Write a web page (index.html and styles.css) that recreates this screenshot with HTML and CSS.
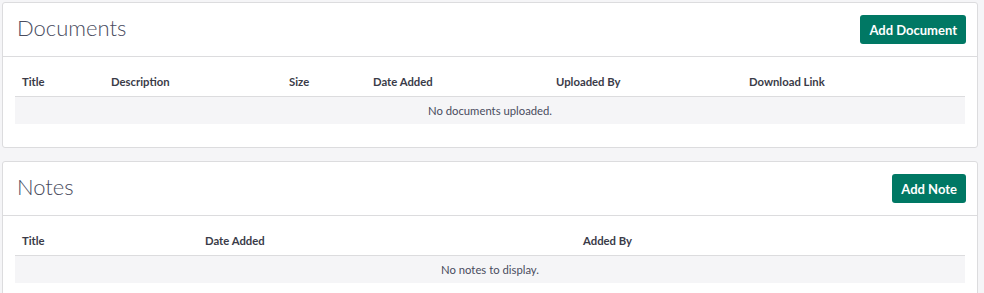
FILE: index.html
```html
<!DOCTYPE html>
<html lang="en">
<head>
    <meta charset="UTF-8">
    <title>Documents and Notes</title>
    <link rel="stylesheet" href="styles.css">
</head>
<body>

    <!-- Documents -->
    <div class="card">
        <div class="card-header">
            <h2>Documents</h2>
            <button class="add-button">Add Document</button>
        </div>
        <div class="card-body">
            <table class="list-table docs-table">
                <thead>
                    <tr>
                        <th>Title</th>
                        <th>Description</th>
                        <th>Size</th>
                        <th>Date Added</th>
                        <th>Uploaded By</th>
                        <th>Download Link</th>
                    </tr>
                </thead>
                <tbody>
                    <tr>
                        <td colspan="6" class="empty">No documents uploaded.</td>
                    </tr>
                </tbody>
            </table>
        </div>
    </div>

    <!-- Notes -->
    <div class="card">
        <div class="card-header">
            <h2>Notes</h2>
            <button class="add-button">Add Note</button>
        </div>
        <div class="card-body">
            <table class="list-table notes-table">
                <thead>
                    <tr>
                        <th>Title</th>
                        <th>Date Added</th>
                        <th>Added By</th>
                    </tr>
                </thead>
                <tbody>
                    <tr>
                        <td colspan="3" class="empty">No notes to display.</td>
                    </tr>
                </tbody>
            </table>
        </div>
    </div>

</body>
</html>
```

FILE: styles.css
```css
body {
    margin: 0;
    padding: 2px 6px 0 2px;
    background-color: #f5f5f7;
    font-family: Lato, "Open Sans", sans-serif;
    color: #3a3b48;
}

.card {
    background-color: #fff;
    border: 1px solid #dcdcde;
    border-radius: 3px;
    margin-bottom: 13px;
}

.card-header {
    display: flex;
    align-items: center;
    justify-content: space-between;
    padding: 12px 11px 12px 14px;
    border-bottom: 1px solid #dcdcde;
}

.card-header h2 {
    margin: 0 0 3px 0;
    font-size: 22px;
    line-height: 1;
    font-weight: 300;
    color: #494c5e;
}

.add-button {
    background-color: #007864;
    color: #fff;
    font-family: Lato, sans-serif;
    font-size: 13px;
    font-weight: 700;
    height: 29px;
    padding: 0 9px;
    border: none;
    border-radius: 3px;
    cursor: pointer;
}

.card-body {
    padding: 10px 12px 23px 12px;
}

.list-table {
    width: 100%;
    border-collapse: collapse;
    font-size: 11.3px;
}

.list-table th {
    text-align: left;
    font-weight: 700;
    color: #3a3b48;
    height: 29px;
    padding: 0 7px;
    border-bottom: 1px solid #dcdcde;
}

.list-table td.empty {
    background-color: #f5f5f7;
    text-align: center;
    color: #494c5e;
    height: 27px;
    padding: 0;
}

/* column widths exclude the 14px of cell padding */
.docs-table th:nth-child(1) { width: 75px; }
.docs-table th:nth-child(2) { width: 164px; }
.docs-table th:nth-child(3) { width: 70px; }
.docs-table th:nth-child(4) { width: 169px; }
.docs-table th:nth-child(5) { width: 179px; }

.notes-table th:nth-child(1) { width: 169px; }
.notes-table th:nth-child(2) { width: 364px; }
```
